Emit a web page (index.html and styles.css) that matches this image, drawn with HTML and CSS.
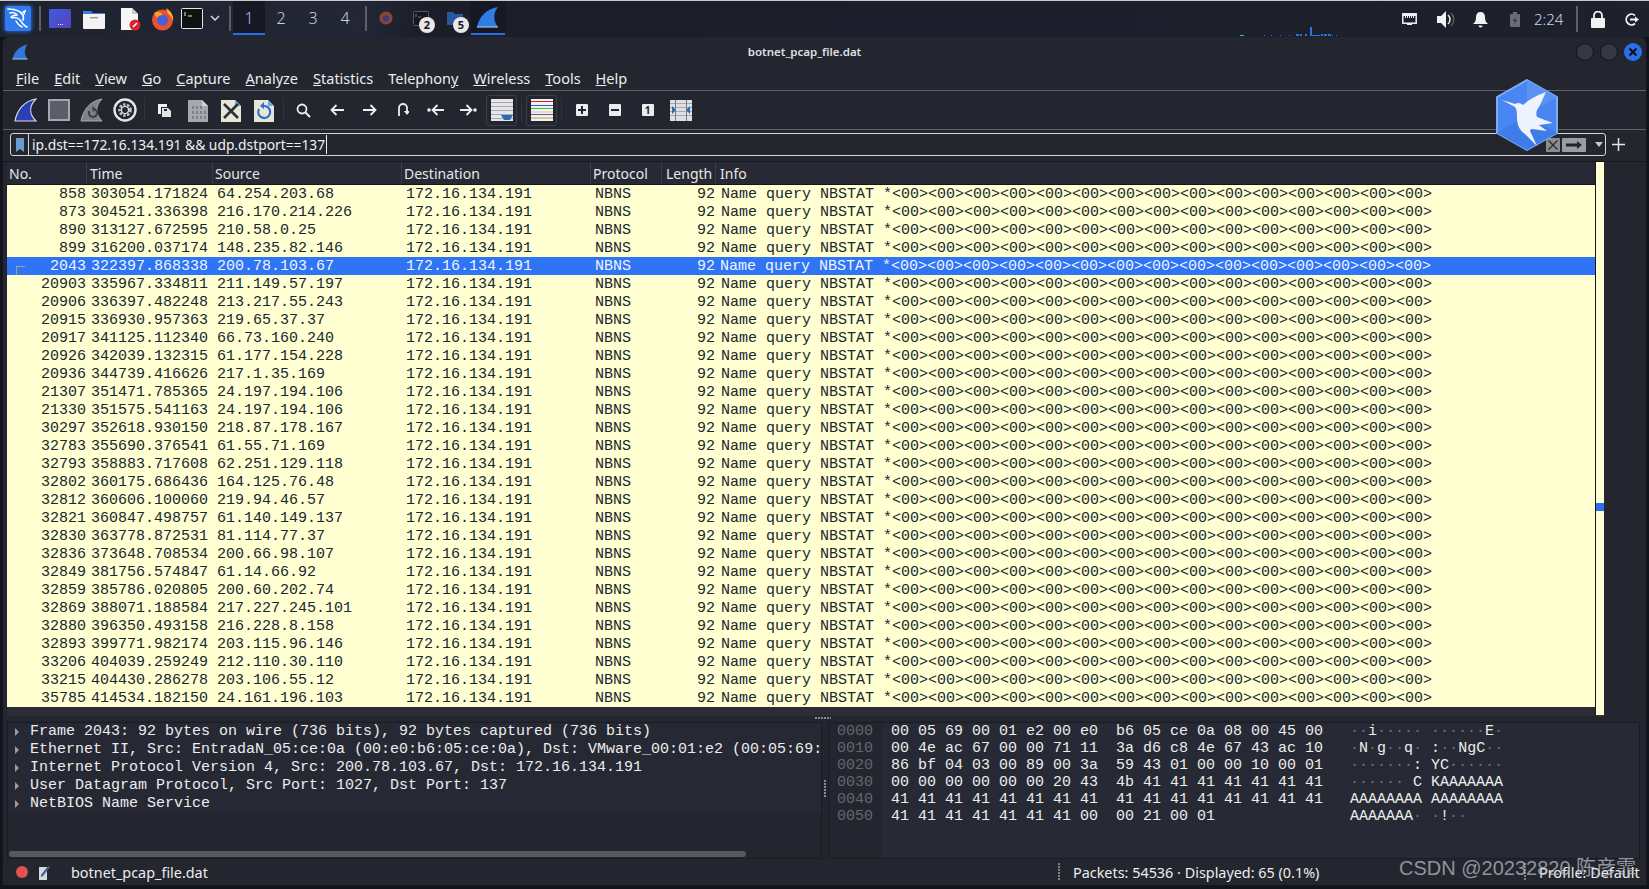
FILE: index.html
```html
<!DOCTYPE html>
<html lang="en">
<head>
<meta charset="utf-8">
<title>botnet_pcap_file.dat</title>
<link rel="stylesheet" href="styles.css">
</head>
<body>
<header class="panel">
  <div class="kali"><svg width="25" height="25" viewBox="0 0 25 25"><path d="M3 3c5 0 9 1 12 3 3 2 4 5 3 8" fill="none" stroke="#fff" stroke-width="1.700" stroke-linecap="round"/><path d="M18 6l2-1-1 3M5 7c3-1 6 0 7 2-3 0-5 1-6 2M7 12c3-1 6 0 8 2 2 3 4 6 7 7M11 15c1 2 2 4 6 6" fill="none" stroke="#fff" stroke-width="1.500" stroke-linecap="round"/></svg></div>
  <i class="pan-sep"></i>
  <div class="launch l1">
    <svg width="22" height="20" viewBox="0 0 22 20"><defs><linearGradient id="dk" x1="0" y1="0" x2="1" y2="1"><stop offset="0" stop-color="#3a5fe0"/><stop offset="1" stop-color="#5a3fb8"/></linearGradient></defs><rect width="22" height="19" rx="1" fill="url(#dk)"/><path d="M9 15h1v1H9zm2 0h1v1h-1zm2 0h1v1h-1z" fill="#e4e8fb"/></svg>
  </div>
  <div class="launch l2">
    <svg width="22" height="20" viewBox="0 0 22 20"><path d="M0 2h8l2 2h12v4H0z" fill="#3b7ded"/><path d="M0 5h22v14a1 1 0 0 1-1 1H1a1 1 0 0 1-1-1z" fill="#f3f3f3"/><rect x="7" y="8" width="8" height="1.400" fill="#9a9a9a"/></svg>
  </div>
  <div class="launch l3">
    <svg width="22" height="24" viewBox="0 0 22 24"><path d="M2 1h11l6 6v16H2z" fill="#f6f6f6"/><path d="M13 1l6 6h-6z" fill="#c8c8c8"/><circle cx="16" cy="18" r="5.500" fill="#d8232a"/><path d="M14 20l4-4" stroke="#fff" stroke-width="1.600"/></svg>
  </div>
  <div class="launch l4">
    <svg width="23" height="24" viewBox="0 0 23 24"><circle cx="11.500" cy="13" r="10.500" fill="#e8532a"/><path d="M15 1c5 3 8 8 7 13-1-4-3-6-5-7z" fill="#ffb02e"/><circle cx="11.500" cy="13" r="5.500" fill="#4a5fe0"/><path d="M3 6c3-2 7-1 9 2-3 0-5 1-6 3-1-2-2-3-3-5z" fill="#ffa02a"/></svg>
  </div>
  <div class="launch l5">
    <svg width="22" height="21" viewBox="0 0 22 21"><rect x=".5" y=".5" width="21" height="20" rx="1" fill="#111" stroke="#e6e6e6"/><path d="M4 4v4M7 8h4" stroke="#e6e6e6"/></svg>
  </div>
  <svg class="chev" width="10" height="6" viewBox="0 0 10 6"><path d="M1 1l4 4 4-4" fill="none" stroke="#d5d6da" stroke-width="1.500"/></svg>
  <i class="pan-sep"></i>
  <nav class="workspaces">
    <span class="ws ws-on">1</span><span class="ws">2</span><span class="ws">3</span><span class="ws">4</span>
  </nav>
  <i class="pan-sep sep-b"></i>
  <div class="task">
    <svg width="14" height="14" viewBox="0 0 15 15"><circle cx="7.500" cy="7.500" r="7" fill="#8a4630"/><circle cx="7.500" cy="8" r="3.500" fill="#3a3f78"/></svg>
  </div>
  <div class="task task-b">
    <svg width="16" height="15" viewBox="0 0 16 15"><rect x=".5" y=".5" width="15" height="14" rx="1" fill="#15171f" stroke="#555761"/><path d="M3 3v3M5 6h3" stroke="#777"/></svg>
    <b class="badge">2</b>
  </div>
  <div class="task task-b">
    <svg width="16" height="14" viewBox="0 0 16 14"><path d="M0 1h6l2 2h8v11H0z" fill="#2a569f"/></svg>
    <b class="badge">5</b>
  </div>
  <div class="task task-on">
    <svg width="24" height="22" viewBox="0 0 24 22"><path d="M1 21C3 11 10 3 22 1c-5 6-5 14 0 20z" fill="#2f7de0"/><path d="M1 21h21" stroke="#9cc4f4" stroke-width="1.200"/></svg>
  </div>
  <div class="netgraph">
    <i class="b2 teal"></i><i class="g20"></i><i class="b1"></i><i class="g6"></i><i class="b1"></i><i class="g8"></i><i class="b1"></i><i class="g8"></i><i class="b1"></i><i class="g6"></i><i class="b3"></i><i class="g1"></i><i class="b2"></i><i class="g3"></i><i class="b2"></i><i class="g3"></i><i class="b2 tall"></i><i class="b8"></i><i class="g1"></i><i class="b2"></i><i class="g1"></i><i class="b3"></i><i class="g1"></i><i class="b3"></i><i class="g1"></i><i class="b1"></i><i class="g3"></i><i class="b1"></i>
  </div>
  <div class="tray">
    <svg class="t1" width="15" height="13" viewBox="0 0 15 13"><rect x=".8" y=".8" width="13.400" height="9.400" fill="none" stroke="#f2f2f2" stroke-width="1.500"/><path d="M1 1h13v2H1zM3 3h1v2H3zm2 0h1v2H5zm2 0h1v2H7zm2 0h1v2H9zm2 0h1v2h-1zM5 10h5v2H5z" fill="#f2f2f2"/></svg>
    <svg class="t2" width="18" height="17" viewBox="0 0 18 17"><path d="M0 5h4l5-5v17l-5-5H0z" fill="#f2f2f2"/><path d="M11 4a6 6 0 0 1 0 9" fill="none" stroke="#f2f2f2" stroke-width="1.500"/><path d="M14 2a9 9 0 0 1 0 13" fill="none" stroke="#666" stroke-width="1.200"/></svg>
    <svg class="t3" width="15" height="17" viewBox="0 0 15 17"><path d="M7.500 1c3 0 4.500 2 4.500 5 0 4 1 5 3 7H0c2-2 3-3 3-7 0-3 1.500-5 4.500-5z" fill="#f2f2f2"/><path d="M5.500 14.500h4a2 2 0 0 1-4 0z" fill="#f2f2f2"/></svg>
    <svg class="t4" width="10" height="15" viewBox="0 0 10 15"><rect x="0" y="2" width="10" height="13" rx="1" fill="#6a6c75"/><rect x="3" y="0" width="4" height="2" fill="#6a6c75"/><path d="M6 5L3 9h2l-1 3 3-4H5z" fill="#2a2c36"/></svg>
    <span class="clock">2:24</span>
    <i class="pan-sep sep-t"></i>
    <svg class="t5" width="14" height="17" viewBox="0 0 14 17"><rect y="7" width="14" height="10" rx="1" fill="#f2f2f2"/><path d="M3 8V4.500a4 4 0 0 1 8 0V8" fill="none" stroke="#f2f2f2" stroke-width="1.800"/></svg>
    <svg class="t6" width="14" height="13" viewBox="0 0 14 13"><path d="M10 2.500A5.300 5.300 0 1 0 10 10.500" fill="none" stroke="#f2f2f2" stroke-width="1.800"/><path d="M5 6.500h6" stroke="#f2f2f2" stroke-width="2"/><path d="M10 3.500l4 3-4 3z" fill="#f2f2f2"/></svg>
  </div>
</header>

<main class="window">
  <div class="titlebar">
    <svg class="tb-logo" width="16" height="16" viewBox="0 0 16 16"><path d="M.5 15C2 8 7 2 15.500 .5c-3.500 5-3.500 10 0 14.500z" fill="#2f78d8"/><path d="M.5 15h15" stroke="#9cc4f4"/></svg>
    <span class="win-title">botnet_pcap_file.dat</span>
    <div class="win-btns">
      <i class="wb"></i><i class="wb"></i>
      <i class="wb wb-close"><svg width="10" height="10" viewBox="0 0 10 10"><path d="M1.500 1.500l7 7m0-7l-7 7" stroke="#11131a" stroke-width="2.200"/></svg></i>
    </div>
  </div>

  <nav class="menubar">
    <span><u>F</u>ile</span><span><u>E</u>dit</span><span><u>V</u>iew</span><span><u>G</u>o</span><span><u>C</u>apture</span><span><u>A</u>nalyze</span><span><u>S</u>tatistics</span><span>Telephon<u>y</u></span><span><u>W</u>ireless</span><span><u>T</u>ools</span><span><u>H</u>elp</span>
  </nav>

  <div class="toolbar">
    <span class="tool"><svg width="23" height="24" viewBox="0 0 23 24"><path d="M1 23C3 12 10 3 22 1c-7 7-7 15 0 22z" fill="#2b3fb5" stroke="#d8d8dc" stroke-width="1.200"/></svg></span>
    <span class="tool"><svg width="22" height="22" viewBox="0 0 22 22"><rect x="1" y="1" width="20" height="20" fill="#5b5e69" stroke="#a5a7ad" stroke-width="2"/></svg></span>
    <span class="tool"><svg width="23" height="24" viewBox="0 0 23 24"><path d="M1 23C3 12 10 3 22 1c-7 7-7 15 0 22z" fill="#7f8188" stroke="#a5a7ad" stroke-width="1"/><path d="M9 13v2a4 4 0 1 0 6-3.500" fill="none" stroke="#3b3d47" stroke-width="2"/><path d="M12 8l4 3-3 3" fill="#3b3d47"/></svg></span>
    <span class="tool"><svg width="24" height="24" viewBox="0 0 24 24"><circle cx="12" cy="12" r="10.500" fill="none" stroke="#e6e6e8" stroke-width="2.400"/><circle cx="12" cy="12" r="5.500" fill="none" stroke="#c8c8cc" stroke-width="2.600" stroke-dasharray="2.400 1.500"/><circle cx="12" cy="12" r="3.500" fill="none" stroke="#e6e6e8" stroke-width="1.200"/></svg></span>
    <i class="tool-gap"></i>
    <span class="tool"><svg width="15" height="15" viewBox="0 0 15 15"><path d="M1 1h9v3H4v7H1z" fill="#f2f2f2"/><path d="M5 5h6l3 3v6H5z" fill="#e4e4e4"/><path d="M7 6h3v2H7z" fill="#22252f"/></svg></span>
    <span class="tool"><svg width="20" height="23" viewBox="0 0 20 23"><path d="M0 1h14l6 6v16H0z" fill="#a6a8af"/><path d="M14 1l6 6h-6z" fill="#d1d2d6"/><path d="M4 7h2v3H4zm4 0h2v3H8zm4 0h2v3h-2zM4 12h2v3H4zm4 0h2v3H8zm4 0h2v3h-2zm4 0h2v3h-2zM4 17h2v3H4zm4 0h2v3H8zm4 0h2v3h-2zm4 0h2v3h-2z" fill="#7d7f87"/></svg></span>
    <span class="tool"><svg width="20" height="23" viewBox="0 0 20 23"><path d="M0 1h14l6 6v16H0z" fill="#e6e6d6"/><path d="M14 1l6 6h-6z" fill="#67a8e6"/><path d="M3 5l14 14M17 5L3 19" stroke="#2c2e36" stroke-width="2.600"/></svg></span>
    <span class="tool"><svg width="20" height="23" viewBox="0 0 20 23"><path d="M0 1h14l6 6v16H0z" fill="#e6e6d6"/><path d="M14 1l6 6h-6z" fill="#67a8e6"/><path d="M10 7a6 6 0 1 1-5 3" fill="none" stroke="#2b6fc9" stroke-width="2.200"/><path d="M10 3v7l-4-3z" fill="#2b6fc9"/></svg></span>
    <i class="tool-gap"></i>
    <span class="tool"><svg width="15" height="15" viewBox="0 0 15 15"><circle cx="6" cy="6" r="4.500" fill="none" stroke="#eee" stroke-width="1.800"/><path d="M9.500 9.500l4.500 4.500" stroke="#eee" stroke-width="2"/></svg></span>
    <span class="tool"><svg width="14" height="12" viewBox="0 0 14 12"><path d="M14 6H2M6.500 1L1.500 6l5 5" fill="none" stroke="#eee" stroke-width="1.800"/></svg></span>
    <span class="tool"><svg width="14" height="12" viewBox="0 0 14 12"><path d="M0 6h12M7.500 1l5 5-5 5" fill="none" stroke="#eee" stroke-width="1.800"/></svg></span>
    <span class="tool"><svg width="12" height="14" viewBox="0 0 12 14"><path d="M2 13V5a4 4 0 0 1 8 0v4" fill="none" stroke="#eee" stroke-width="1.800"/><path d="M7 8h6l-3 4z" fill="#eee"/></svg></span>
    <span class="tool"><svg width="17" height="12" viewBox="0 0 17 12"><circle cx="2" cy="6" r="1.800" fill="#eee"/><path d="M17 6H6M10.500 1L5.500 6l5 5" fill="none" stroke="#eee" stroke-width="1.800"/></svg></span>
    <span class="tool"><svg width="17" height="12" viewBox="0 0 17 12"><circle cx="15" cy="6" r="1.800" fill="#eee"/><path d="M0 6h11M6.500 1l5 5-5 5" fill="none" stroke="#eee" stroke-width="1.800"/></svg></span>
    <span class="tool tool-box"><svg width="22" height="22" viewBox="0 0 22 22"><rect width="22" height="22" fill="#e6e6e8"/><path d="M0 3.500h22M0 7.500h22M0 11.500h22M0 15.500h22M0 19.500h22" stroke="#a6a8af"/><path d="M10 16h12l-3 5h-6z" fill="#2f68b3"/></svg></span>
    <i class="tool-gap"></i>
    <span class="tool tool-box"><svg width="22" height="22" viewBox="0 0 22 22"><rect width="22" height="22" fill="#f2f2f2"/><path d="M0 2.500h22" stroke="#e02020"/><path d="M0 6.500h22" stroke="#3d58c8"/><path d="M0 9.500h22" stroke="#3ec01e"/><path d="M0 13h22" stroke="#c8c8c8"/><path d="M0 15.500h22" stroke="#7a4a9c"/><path d="M0 19h22" stroke="#b8a028"/></svg></span>
    <i class="tool-gap"></i>
    <span class="tool"><span class="sq"><svg width="8" height="8" viewBox="0 0 8 8"><path d="M4 0v8M0 4h8" stroke="#22252f" stroke-width="2"/></svg></span></span>
    <span class="tool"><span class="sq"><svg width="8" height="8" viewBox="0 0 8 8"><path d="M0 4h8" stroke="#22252f" stroke-width="2"/></svg></span></span>
    <span class="tool"><span class="sq sq-t">1</span></span>
    <span class="tool"><svg width="22" height="21" viewBox="0 0 22 21"><rect width="22" height="21" fill="#e0e0e2"/><path d="M0 3.500h22M0 7.500h22M0 11.500h22M0 15.500h22" stroke="#a6a8af"/><path d="M5.500 0v21M16.500 0v21" stroke="#777980"/><path d="M2 6l4 4-4 4zM20 6l-4 4 4 4z" fill="#2f68b3"/></svg></span>
  </div>

  <div class="filterbar">
    <div class="field">
      <span class="bookmark"><svg width="8" height="14" viewBox="0 0 8 14"><path d="M0 0h8v14L4 11l-4 3z" fill="#6c9bd2"/></svg></span>
      <span class="ftext">ip.dst==172.16.134.191 &amp;&amp; udp.dstport==137</span><i class="caret"></i>
      <span class="f-x"><svg width="14" height="14" viewBox="0 0 14 14"><rect width="14" height="14" rx="1" fill="#8b8d90"/><path d="M2.500 2.500l9 9m0-9l-9 9" stroke="#2b2d36" stroke-width="1.400"/></svg></span>
      <span class="f-go"><svg width="24" height="14" viewBox="0 0 24 14"><rect width="24" height="14" rx="1" fill="#9b9da3"/><path d="M4 5.500h11V3l5 4-5 4V8.500H4z" fill="#23252e"/></svg></span>
      <svg class="f-dd" width="8" height="5" viewBox="0 0 8 5"><path d="M0 0h8L4 5z" fill="#c9c9cc"/></svg>
    </div>
    <svg class="f-plus" width="13" height="13" viewBox="0 0 13 13"><path d="M6.500 0v13M0 6.500h13" stroke="#e6e6e8" stroke-width="1.500"/></svg>
  </div>

  <section class="list">
    <div class="table">
      <div class="thead"><span>No.</span><span>Time</span><span>Source</span><span>Destination</span><span>Protocol</span><span>Length</span><span>Info</span></div>
      <div class="rows">
        <div class="row"><span>858</span><span>303054.171824</span><span>64.254.203.68</span><span>172.16.134.191</span><span>NBNS</span><span>92</span><span>Name query NBSTAT *&lt;00&gt;&lt;00&gt;&lt;00&gt;&lt;00&gt;&lt;00&gt;&lt;00&gt;&lt;00&gt;&lt;00&gt;&lt;00&gt;&lt;00&gt;&lt;00&gt;&lt;00&gt;&lt;00&gt;&lt;00&gt;&lt;00&gt;</span></div>
        <div class="row"><span>873</span><span>304521.336398</span><span>216.170.214.226</span><span>172.16.134.191</span><span>NBNS</span><span>92</span><span>Name query NBSTAT *&lt;00&gt;&lt;00&gt;&lt;00&gt;&lt;00&gt;&lt;00&gt;&lt;00&gt;&lt;00&gt;&lt;00&gt;&lt;00&gt;&lt;00&gt;&lt;00&gt;&lt;00&gt;&lt;00&gt;&lt;00&gt;&lt;00&gt;</span></div>
        <div class="row"><span>890</span><span>313127.672595</span><span>210.58.0.25</span><span>172.16.134.191</span><span>NBNS</span><span>92</span><span>Name query NBSTAT *&lt;00&gt;&lt;00&gt;&lt;00&gt;&lt;00&gt;&lt;00&gt;&lt;00&gt;&lt;00&gt;&lt;00&gt;&lt;00&gt;&lt;00&gt;&lt;00&gt;&lt;00&gt;&lt;00&gt;&lt;00&gt;&lt;00&gt;</span></div>
        <div class="row"><span>899</span><span>316200.037174</span><span>148.235.82.146</span><span>172.16.134.191</span><span>NBNS</span><span>92</span><span>Name query NBSTAT *&lt;00&gt;&lt;00&gt;&lt;00&gt;&lt;00&gt;&lt;00&gt;&lt;00&gt;&lt;00&gt;&lt;00&gt;&lt;00&gt;&lt;00&gt;&lt;00&gt;&lt;00&gt;&lt;00&gt;&lt;00&gt;&lt;00&gt;</span></div>
        <div class="row row-sel"><span>2043</span><span>322397.868338</span><span>200.78.103.67</span><span>172.16.134.191</span><span>NBNS</span><span>92</span><span>Name query NBSTAT *&lt;00&gt;&lt;00&gt;&lt;00&gt;&lt;00&gt;&lt;00&gt;&lt;00&gt;&lt;00&gt;&lt;00&gt;&lt;00&gt;&lt;00&gt;&lt;00&gt;&lt;00&gt;&lt;00&gt;&lt;00&gt;&lt;00&gt;</span><i class="conv"></i></div>
        <div class="row"><span>20903</span><span>335967.334811</span><span>211.149.57.197</span><span>172.16.134.191</span><span>NBNS</span><span>92</span><span>Name query NBSTAT *&lt;00&gt;&lt;00&gt;&lt;00&gt;&lt;00&gt;&lt;00&gt;&lt;00&gt;&lt;00&gt;&lt;00&gt;&lt;00&gt;&lt;00&gt;&lt;00&gt;&lt;00&gt;&lt;00&gt;&lt;00&gt;&lt;00&gt;</span></div>
        <div class="row"><span>20906</span><span>336397.482248</span><span>213.217.55.243</span><span>172.16.134.191</span><span>NBNS</span><span>92</span><span>Name query NBSTAT *&lt;00&gt;&lt;00&gt;&lt;00&gt;&lt;00&gt;&lt;00&gt;&lt;00&gt;&lt;00&gt;&lt;00&gt;&lt;00&gt;&lt;00&gt;&lt;00&gt;&lt;00&gt;&lt;00&gt;&lt;00&gt;&lt;00&gt;</span></div>
        <div class="row"><span>20915</span><span>336930.957363</span><span>219.65.37.37</span><span>172.16.134.191</span><span>NBNS</span><span>92</span><span>Name query NBSTAT *&lt;00&gt;&lt;00&gt;&lt;00&gt;&lt;00&gt;&lt;00&gt;&lt;00&gt;&lt;00&gt;&lt;00&gt;&lt;00&gt;&lt;00&gt;&lt;00&gt;&lt;00&gt;&lt;00&gt;&lt;00&gt;&lt;00&gt;</span></div>
        <div class="row"><span>20917</span><span>341125.112340</span><span>66.73.160.240</span><span>172.16.134.191</span><span>NBNS</span><span>92</span><span>Name query NBSTAT *&lt;00&gt;&lt;00&gt;&lt;00&gt;&lt;00&gt;&lt;00&gt;&lt;00&gt;&lt;00&gt;&lt;00&gt;&lt;00&gt;&lt;00&gt;&lt;00&gt;&lt;00&gt;&lt;00&gt;&lt;00&gt;&lt;00&gt;</span></div>
        <div class="row"><span>20926</span><span>342039.132315</span><span>61.177.154.228</span><span>172.16.134.191</span><span>NBNS</span><span>92</span><span>Name query NBSTAT *&lt;00&gt;&lt;00&gt;&lt;00&gt;&lt;00&gt;&lt;00&gt;&lt;00&gt;&lt;00&gt;&lt;00&gt;&lt;00&gt;&lt;00&gt;&lt;00&gt;&lt;00&gt;&lt;00&gt;&lt;00&gt;&lt;00&gt;</span></div>
        <div class="row"><span>20936</span><span>344739.416626</span><span>217.1.35.169</span><span>172.16.134.191</span><span>NBNS</span><span>92</span><span>Name query NBSTAT *&lt;00&gt;&lt;00&gt;&lt;00&gt;&lt;00&gt;&lt;00&gt;&lt;00&gt;&lt;00&gt;&lt;00&gt;&lt;00&gt;&lt;00&gt;&lt;00&gt;&lt;00&gt;&lt;00&gt;&lt;00&gt;&lt;00&gt;</span></div>
        <div class="row"><span>21307</span><span>351471.785365</span><span>24.197.194.106</span><span>172.16.134.191</span><span>NBNS</span><span>92</span><span>Name query NBSTAT *&lt;00&gt;&lt;00&gt;&lt;00&gt;&lt;00&gt;&lt;00&gt;&lt;00&gt;&lt;00&gt;&lt;00&gt;&lt;00&gt;&lt;00&gt;&lt;00&gt;&lt;00&gt;&lt;00&gt;&lt;00&gt;&lt;00&gt;</span></div>
        <div class="row"><span>21330</span><span>351575.541163</span><span>24.197.194.106</span><span>172.16.134.191</span><span>NBNS</span><span>92</span><span>Name query NBSTAT *&lt;00&gt;&lt;00&gt;&lt;00&gt;&lt;00&gt;&lt;00&gt;&lt;00&gt;&lt;00&gt;&lt;00&gt;&lt;00&gt;&lt;00&gt;&lt;00&gt;&lt;00&gt;&lt;00&gt;&lt;00&gt;&lt;00&gt;</span></div>
        <div class="row"><span>30297</span><span>352618.930150</span><span>218.87.178.167</span><span>172.16.134.191</span><span>NBNS</span><span>92</span><span>Name query NBSTAT *&lt;00&gt;&lt;00&gt;&lt;00&gt;&lt;00&gt;&lt;00&gt;&lt;00&gt;&lt;00&gt;&lt;00&gt;&lt;00&gt;&lt;00&gt;&lt;00&gt;&lt;00&gt;&lt;00&gt;&lt;00&gt;&lt;00&gt;</span></div>
        <div class="row"><span>32783</span><span>355690.376541</span><span>61.55.71.169</span><span>172.16.134.191</span><span>NBNS</span><span>92</span><span>Name query NBSTAT *&lt;00&gt;&lt;00&gt;&lt;00&gt;&lt;00&gt;&lt;00&gt;&lt;00&gt;&lt;00&gt;&lt;00&gt;&lt;00&gt;&lt;00&gt;&lt;00&gt;&lt;00&gt;&lt;00&gt;&lt;00&gt;&lt;00&gt;</span></div>
        <div class="row"><span>32793</span><span>358883.717608</span><span>62.251.129.118</span><span>172.16.134.191</span><span>NBNS</span><span>92</span><span>Name query NBSTAT *&lt;00&gt;&lt;00&gt;&lt;00&gt;&lt;00&gt;&lt;00&gt;&lt;00&gt;&lt;00&gt;&lt;00&gt;&lt;00&gt;&lt;00&gt;&lt;00&gt;&lt;00&gt;&lt;00&gt;&lt;00&gt;&lt;00&gt;</span></div>
        <div class="row"><span>32802</span><span>360175.686436</span><span>164.125.76.48</span><span>172.16.134.191</span><span>NBNS</span><span>92</span><span>Name query NBSTAT *&lt;00&gt;&lt;00&gt;&lt;00&gt;&lt;00&gt;&lt;00&gt;&lt;00&gt;&lt;00&gt;&lt;00&gt;&lt;00&gt;&lt;00&gt;&lt;00&gt;&lt;00&gt;&lt;00&gt;&lt;00&gt;&lt;00&gt;</span></div>
        <div class="row"><span>32812</span><span>360606.100060</span><span>219.94.46.57</span><span>172.16.134.191</span><span>NBNS</span><span>92</span><span>Name query NBSTAT *&lt;00&gt;&lt;00&gt;&lt;00&gt;&lt;00&gt;&lt;00&gt;&lt;00&gt;&lt;00&gt;&lt;00&gt;&lt;00&gt;&lt;00&gt;&lt;00&gt;&lt;00&gt;&lt;00&gt;&lt;00&gt;&lt;00&gt;</span></div>
        <div class="row"><span>32821</span><span>360847.498757</span><span>61.140.149.137</span><span>172.16.134.191</span><span>NBNS</span><span>92</span><span>Name query NBSTAT *&lt;00&gt;&lt;00&gt;&lt;00&gt;&lt;00&gt;&lt;00&gt;&lt;00&gt;&lt;00&gt;&lt;00&gt;&lt;00&gt;&lt;00&gt;&lt;00&gt;&lt;00&gt;&lt;00&gt;&lt;00&gt;&lt;00&gt;</span></div>
        <div class="row"><span>32830</span><span>363778.872531</span><span>81.114.77.37</span><span>172.16.134.191</span><span>NBNS</span><span>92</span><span>Name query NBSTAT *&lt;00&gt;&lt;00&gt;&lt;00&gt;&lt;00&gt;&lt;00&gt;&lt;00&gt;&lt;00&gt;&lt;00&gt;&lt;00&gt;&lt;00&gt;&lt;00&gt;&lt;00&gt;&lt;00&gt;&lt;00&gt;&lt;00&gt;</span></div>
        <div class="row"><span>32836</span><span>373648.708534</span><span>200.66.98.107</span><span>172.16.134.191</span><span>NBNS</span><span>92</span><span>Name query NBSTAT *&lt;00&gt;&lt;00&gt;&lt;00&gt;&lt;00&gt;&lt;00&gt;&lt;00&gt;&lt;00&gt;&lt;00&gt;&lt;00&gt;&lt;00&gt;&lt;00&gt;&lt;00&gt;&lt;00&gt;&lt;00&gt;&lt;00&gt;</span></div>
        <div class="row"><span>32849</span><span>381756.574847</span><span>61.14.66.92</span><span>172.16.134.191</span><span>NBNS</span><span>92</span><span>Name query NBSTAT *&lt;00&gt;&lt;00&gt;&lt;00&gt;&lt;00&gt;&lt;00&gt;&lt;00&gt;&lt;00&gt;&lt;00&gt;&lt;00&gt;&lt;00&gt;&lt;00&gt;&lt;00&gt;&lt;00&gt;&lt;00&gt;&lt;00&gt;</span></div>
        <div class="row"><span>32859</span><span>385786.020805</span><span>200.60.202.74</span><span>172.16.134.191</span><span>NBNS</span><span>92</span><span>Name query NBSTAT *&lt;00&gt;&lt;00&gt;&lt;00&gt;&lt;00&gt;&lt;00&gt;&lt;00&gt;&lt;00&gt;&lt;00&gt;&lt;00&gt;&lt;00&gt;&lt;00&gt;&lt;00&gt;&lt;00&gt;&lt;00&gt;&lt;00&gt;</span></div>
        <div class="row"><span>32869</span><span>388071.188584</span><span>217.227.245.101</span><span>172.16.134.191</span><span>NBNS</span><span>92</span><span>Name query NBSTAT *&lt;00&gt;&lt;00&gt;&lt;00&gt;&lt;00&gt;&lt;00&gt;&lt;00&gt;&lt;00&gt;&lt;00&gt;&lt;00&gt;&lt;00&gt;&lt;00&gt;&lt;00&gt;&lt;00&gt;&lt;00&gt;&lt;00&gt;</span></div>
        <div class="row"><span>32880</span><span>396350.493158</span><span>216.228.8.158</span><span>172.16.134.191</span><span>NBNS</span><span>92</span><span>Name query NBSTAT *&lt;00&gt;&lt;00&gt;&lt;00&gt;&lt;00&gt;&lt;00&gt;&lt;00&gt;&lt;00&gt;&lt;00&gt;&lt;00&gt;&lt;00&gt;&lt;00&gt;&lt;00&gt;&lt;00&gt;&lt;00&gt;&lt;00&gt;</span></div>
        <div class="row"><span>32893</span><span>399771.982174</span><span>203.115.96.146</span><span>172.16.134.191</span><span>NBNS</span><span>92</span><span>Name query NBSTAT *&lt;00&gt;&lt;00&gt;&lt;00&gt;&lt;00&gt;&lt;00&gt;&lt;00&gt;&lt;00&gt;&lt;00&gt;&lt;00&gt;&lt;00&gt;&lt;00&gt;&lt;00&gt;&lt;00&gt;&lt;00&gt;&lt;00&gt;</span></div>
        <div class="row"><span>33206</span><span>404039.259249</span><span>212.110.30.110</span><span>172.16.134.191</span><span>NBNS</span><span>92</span><span>Name query NBSTAT *&lt;00&gt;&lt;00&gt;&lt;00&gt;&lt;00&gt;&lt;00&gt;&lt;00&gt;&lt;00&gt;&lt;00&gt;&lt;00&gt;&lt;00&gt;&lt;00&gt;&lt;00&gt;&lt;00&gt;&lt;00&gt;&lt;00&gt;</span></div>
        <div class="row"><span>33215</span><span>404430.286278</span><span>203.106.55.12</span><span>172.16.134.191</span><span>NBNS</span><span>92</span><span>Name query NBSTAT *&lt;00&gt;&lt;00&gt;&lt;00&gt;&lt;00&gt;&lt;00&gt;&lt;00&gt;&lt;00&gt;&lt;00&gt;&lt;00&gt;&lt;00&gt;&lt;00&gt;&lt;00&gt;&lt;00&gt;&lt;00&gt;&lt;00&gt;</span></div>
        <div class="row"><span>35785</span><span>414534.182150</span><span>24.161.196.103</span><span>172.16.134.191</span><span>NBNS</span><span>92</span><span>Name query NBSTAT *&lt;00&gt;&lt;00&gt;&lt;00&gt;&lt;00&gt;&lt;00&gt;&lt;00&gt;&lt;00&gt;&lt;00&gt;&lt;00&gt;&lt;00&gt;&lt;00&gt;&lt;00&gt;&lt;00&gt;&lt;00&gt;&lt;00&gt;</span></div>
      </div>
    </div>
    <div class="minimap"><i class="mark"></i></div>
  </section>

  <div class="split-h"><i class="dots"></i></div>

  <section class="panes">
    <div class="details">
      <div class="d-row"><i class="tri"></i>Frame 2043: 92 bytes on wire (736 bits), 92 bytes captured (736 bits)</div>
      <div class="d-row"><i class="tri"></i>Ethernet II, Src: EntradaN_05:ce:0a (00:e0:b6:05:ce:0a), Dst: VMware_00:01:e2 (00:05:69:</div>
      <div class="d-row"><i class="tri"></i>Internet Protocol Version 4, Src: 200.78.103.67, Dst: 172.16.134.191</div>
      <div class="d-row"><i class="tri"></i>User Datagram Protocol, Src Port: 1027, Dst Port: 137</div>
      <div class="d-row"><i class="tri"></i>NetBIOS Name Service</div>
      <div class="d-scroll"><i></i></div>
    </div>
    <div class="split-v"><i></i></div>
    <div class="hex">
      <div class="offs">0000
0010
0020
0030
0040
0050</div>
      <div class="bytes">00 05 69 00 01 e2 00 e0  b6 05 ce 0a 08 00 45 00
00 4e ac 67 00 00 71 11  3a d6 c8 4e 67 43 ac 10
86 bf 04 03 00 89 00 3a  59 43 01 00 00 10 00 01
00 00 00 00 00 00 20 43  4b 41 41 41 41 41 41 41
41 41 41 41 41 41 41 41  41 41 41 41 41 41 41 41
41 41 41 41 41 41 41 00  00 21 00 01</div>
      <div class="ascii"><s>··</s>i<s>·····</s> <s>······</s>E<s>·</s>
<s>·</s>N<s>·</s>g<s>··</s>q<s>·</s> :<s>··</s>NgC<s>··</s>
<s>·······</s>: YC<s>······</s>
<s>······</s> C KAAAAAAA
AAAAAAAA AAAAAAAA
AAAAAAA<s>·</s> <s>·</s>!<s>··</s></div>
    </div>
  </section>

  <footer class="status">
    <i class="led"></i>
    <svg class="note" width="12" height="15" viewBox="0 0 12 15"><path d="M1 2h8v13H1z" fill="#d8d8da"/><path d="M3 10l7-9 2 1-7 9-2 1z" fill="#3d5f95"/></svg>
    <span class="st-file">botnet_pcap_file.dat</span>
    <i class="grip"></i>
    <span class="st-pk">Packets: 54536 · Displayed: 65 (0.1%)</span>
    <i class="grip"></i>
    <span class="st-prof">Profile: Default</span>
  </footer>
</main>

<svg class="bird" width="64" height="72" viewBox="0 0 64 72">
  <path d="M32 1l30 17v36L32 71 2 54V18z" fill="#4a86f2" stroke="#7eabf7" stroke-width="2" stroke-linejoin="round"/>
  <path d="M32 1l30 17-30 18z" fill="#5b93f5"/>
  <path d="M2 54l30-18 30 18-30 17z" fill="#3f7cea"/>
  <path d="M7 21l13 4c3-2 6-1 8 1 6-5 12-9 23-13-3 6-5 12-9 18-1 3-1 5 0 7l16 6-14 2 8 6-15-2c-1 0-1 0-2 2l7 15-12-12c-5-3-8-9-8-16 0-5 0-8-2-11z" fill="#eef3fd"/>
</svg>
<div class="watermark">CSDN @20232820 陈彦霏</div>
</body>
</html>
```
FILE: styles.css
```css
* { box-sizing: border-box; }
html, body { margin: 0; padding: 0; }
body {
  width: 1649px;
  height: 889px;
  overflow: hidden;
  background: #12141c;
  font-family: "Noto Sans", sans-serif;
  color: #eceded;
  display: flex;
  flex-direction: column;
  position: relative;
  padding-bottom: 4px;
}
i, s { font-style: normal; text-decoration: none; display: block; }

/* Desktop panel */
.panel {
  height: 37px;
  flex: none;
  display: flex;
  align-items: flex-start;
  border-top: 1px solid #c8c9cd;
  background: linear-gradient(100deg, #1f222e 0%, #232636 22%, #1b1e29 26%, #1c1f2b 60%, #1e212c 100%);
  position: relative;
}
.kali {
  width: 26px; height: 25px;
  margin: 5px 0 0 5px;
  background: #2f7cf0;
  box-shadow: 0 0 5px #2f7cf0;
  border-radius: 2px;
  display: flex;
}
.pan-sep { width: 2px; height: 25px; margin: 5px 2px 0 8px; background: #5c5e68; flex: none; }
.launch { height: 34px; flex: none; display: flex; align-items: center; justify-content: center; padding-top: 1px; }
.l1 { width: 34px; }
.l2 { width: 34px; }
.l3 { width: 37px; }
.l4 { width: 28px; }
.l5 { width: 32px; }
.chev { margin: 14px 1px 0 2px; flex: none; }
.workspaces { display: flex; }
.ws {
  width: 32px; height: 34px;
  text-align: center;
  font: 300 16px/34px "Noto Sans", sans-serif;
  color: #c9d0de;
}
.ws-on { background: #161823; border-bottom: 2px solid #2a6fe0; color: #9cc3f5; }
.sep-b { margin-left: 4px; }
.task { width: 34px; height: 34px; flex: none; display: flex; align-items: center; justify-content: center; position: relative; }
.task-b { justify-content: flex-start; padding-left: 10px; }
.task-on { background: #161823; border-bottom: 2px solid #2a6fe0; }
.badge {
  position: absolute;
  left: 16px; top: 16px;
  width: 16px; height: 16px;
  border-radius: 50%;
  background: #e8e8e8;
  color: #15171f;
  font: 700 11px/16px "Noto Sans", sans-serif;
  text-align: center;
}
.netgraph {
  position: absolute;
  left: 1240px; top: 24px;
  height: 11px;
  display: flex;
  align-items: flex-end;
}
.netgraph i { height: 1px; }
.netgraph .b1 { width: 1px; background: #2a74e8; }
.netgraph .b2 { width: 2px; background: #2a74e8; height: 2px; }
.netgraph .b3 { width: 3px; background: #2a74e8; height: 2px; }
.netgraph .b8 { width: 8px; background: #2a74e8; height: 1px; }
.netgraph .tall { height: 9px; }
.netgraph .teal { width: 4px; background: #22c8b0; height: 1px; }
.netgraph .g1 { width: 1px; }
.netgraph .g3 { width: 3px; }
.netgraph .g6 { width: 6px; }
.netgraph .g8 { width: 8px; }
.netgraph .g20 { width: 20px; }
.tray {
  margin-left: auto;
  height: 36px;
  display: flex;
  align-items: center;
  padding-right: 10px;
}
.t1 { margin-right: 20px; }
.t2 { margin-right: 18px; }
.t3 { margin-right: 22px; }
.t4 { margin-right: 14px; }
.clock { font: 300 15px/20px "Noto Sans", sans-serif; color: #c8d8f0; width: 30px; }
.tray .sep-t { margin: 0 13px 0 12px; height: 26px; }
.t5 { margin-right: 20px; }

/* Window */
.window {
  flex: 1;
  min-height: 0;
  margin: 0 3px;
  background: #23262f;
  border-radius: 6px 6px 0 0;
  display: flex;
  flex-direction: column;
  box-shadow: 0 0 0 1px #15171e;
}
.titlebar {
  height: 29px;
  flex: none;
  position: relative;
  display: flex;
  align-items: center;
  padding-left: 9px;
}
.win-title {
  position: absolute;
  left: 0; right: 0;
  padding-right: 40px;
  text-align: center;
  font-size: 11.500px;
  font-weight: 600;
  color: #dfe0e3;
}
.win-btns { margin-left: auto; display: flex; gap: 6px; padding-right: 4px; position: relative; }
.wb { width: 18px; height: 18px; border-radius: 50%; background: #343843; border: 1px solid #12141b; }
.wb-close { background: #2a70ea; border: none; display: flex; align-items: center; justify-content: center; }

.menubar {
  height: 25px;
  flex: none;
  display: flex;
  gap: 15px;
  padding-left: 13px;
  align-items: center;
  font-size: 14.500px;
  border-bottom: 1px solid #5d5f69;
}
.toolbar {
  height: 39px;
  flex: none;
  display: flex;
  align-items: center;
  padding-left: 6px;
  border-bottom: 1px solid #5d5f69;
}
.tool { width: 33px; height: 33px; flex: none; display: flex; align-items: center; justify-content: center; }
.tool-box { position: relative; }
.tool-box::after {
  content: "";
  position: absolute;
  inset: 1px 1px 1px 1px;
  border: 1px solid #3c3f4a;
  border-radius: 3px;
}
.tool-gap { width: 7px; height: 24px; flex: none; position: relative; }
.tool-gap::after { content: ""; position: absolute; left: 3px; top: 0; bottom: 0; width: 1px; background: #30333d; }
.sq { width: 12px; height: 12px; background: #ececee; border-radius: 1px; display: flex; align-items: center; justify-content: center; }
.sq-t { color: #22252f; font: 700 10px/12px "Noto Sans", sans-serif; }

.filterbar {
  height: 32px;
  flex: none;
  display: flex;
  align-items: flex-start;
  padding: 3px 0 0 7px;
  border-bottom: 1px solid #16181f;
}
.field {
  width: 1596px;
  height: 23px;
  border: 1px solid #d4d5d8;
  border-radius: 3px;
  display: flex;
  align-items: center;
  font-size: 13.800px;
  color: #f0f0f2;
}
.bookmark {
  width: 18px; height: 21px;
  border-right: 1px solid #d4d5d8;
  display: flex;
  align-items: center;
  justify-content: center;
  flex: none;
}
.ftext { margin-left: 3px; white-space: nowrap; }
.caret { width: 1px; height: 19px; background: #f0f0f2; margin-left: 1px; }
.f-x { margin-left: auto; display: flex; margin-right: 2px; }
.f-go { display: flex; margin-right: 9px; }
.f-dd { margin-right: 2px; flex: none; }
.f-plus { margin: 5px 0 0 6px; flex: none; }

/* Packet list */
.list {
  height: 554px;
  flex: none;
  display: flex;
  padding-left: 4px;
}
.table { width: 1589px; flex: none; display: flex; flex-direction: column; background: #2a2d37; border-right: 1px solid #15171e; }
.thead, .row {
  display: grid;
  grid-template-columns: 80px 126px 189px 189px 71px 54px 1fr;
}
.thead {
  height: 23px;
  flex: none;
  background: #272a34;
  font-size: 14px;
  line-height: 24px;
  color: #e6e7ea;
  border-bottom: 1px solid #14161c;
}
.thead span { padding-left: 2px; border-right: 1px solid #3a3d48; white-space: nowrap; overflow: hidden; }
.thead span:nth-child(2) { padding-left: 3px; }
.thead span:nth-child(n+6) { padding-left: 4px; }
.thead span:last-child { border: none; }
.rows {
  font-family: "Liberation Mono", monospace;
  font-size: 15px;
  color: #182730;
  background: #ffffd2;
}
.row { height: 18px; line-height: 20px; grid-template-rows: 18px; position: relative; white-space: pre; }
.row span { padding-left: 4px; overflow: hidden; }
.row span:first-child { text-align: right; padding: 0 1px 0 0; }
.row span:nth-child(6) { text-align: right; padding: 0 1px 0 0; }
.row span:last-child { padding-left: 5px; }
.row-sel { background: #2e74f4; color: #eef4ff; }
.conv {
  position: absolute;
  left: 9px; top: 9px;
  width: 9px; height: 9px;
  border-left: 1px solid #a8a08a;
  border-top: 1px solid #a8a08a;
}
.minimap { width: 8px; flex: none; background: #ffffd2; border-bottom: 1px solid #3c3f48; position: relative; padding-top: 341px; }
.mark { height: 8px; background: #2a70f2; }

.split-h { height: 6px; flex: none; position: relative; }
.dots { position: absolute; left: 812px; top: 1px; width: 16px; height: 2px; background: repeating-linear-gradient(90deg, #8a8c94 0 2px, transparent 2px 3px); }

/* Bottom panes */
.panes { height: 137px; flex: none; display: flex; }
.details {
  width: 815px;
  margin-left: 4px;
  flex: none;
  position: relative;
  overflow: hidden;
  background: #23262f;
  border: 1px solid #1a1c24;
  font-family: "Liberation Mono", monospace;
  font-size: 15px;
  color: #eceded;
}
.d-row { height: 18px; line-height: 18px; padding-left: 22px; position: relative; background: #262933; white-space: pre; }
.tri { position: absolute; left: 7px; top: 5px; width: 0; height: 0; border-left: 4px solid #9b9da3; border-top: 4px solid transparent; border-bottom: 4px solid transparent; }
.d-scroll { position: absolute; left: 0; right: 0; bottom: 0; height: 7px; }
.d-scroll i { width: 737px; height: 6px; margin-left: 1px; background: #565962; border-radius: 3px; }
.split-v { width: 6px; flex: none; position: relative; }
.split-v i { position: absolute; left: 2px; top: 58px; width: 2px; height: 18px; background: repeating-linear-gradient(180deg, #8a8c94 0 2px, transparent 2px 3px); }
.hex {
  width: 812px;
  flex: none;
  display: flex;
  background: #272a34;
  border: 1px solid #1a1c24;
  font-family: "Liberation Mono", monospace;
  font-size: 15px;
  line-height: 17px;
  white-space: pre;
  color: #eceded;
}
.offs { width: 53px; padding-left: 8px; background: #23262f; color: #63666f; flex: none; }
.bytes { padding-left: 9px; flex: none; width: 468px; }
.ascii { flex: none; }
.ascii s { display: inline; color: #6d7079; }

/* Status bar */
.status {
  flex: 1;
  min-height: 0;
  display: flex;
  align-items: center;
  font-size: 14.400px;
  color: #eceded;
  padding-left: 13px;
}
.led { width: 12px; height: 12px; border-radius: 50%; background: #e2524f; flex: none; }
.note { margin-left: 10px; flex: none; }
.st-file { margin-left: 21px; flex: 1; }
.grip { width: 2px; height: 18px; background: repeating-linear-gradient(180deg, #80828a 0 2px, transparent 2px 3px); flex: none; }
.st-pk { width: 451px; margin-left: 13px; flex: none; }
.st-prof { width: 107px; margin-left: 13px; padding-right: 10px; flex: none; white-space: nowrap; }

/* Overlays */
.bird { position: absolute; left: 1495px; top: 79px; }
.watermark {
  position: absolute;
  left: 1399px; top: 854px;
  font: 20px/28px "Liberation Sans", "Noto Sans CJK SC", sans-serif;
  color: rgba(190, 192, 196, 0.72);
  white-space: nowrap;
}
```
